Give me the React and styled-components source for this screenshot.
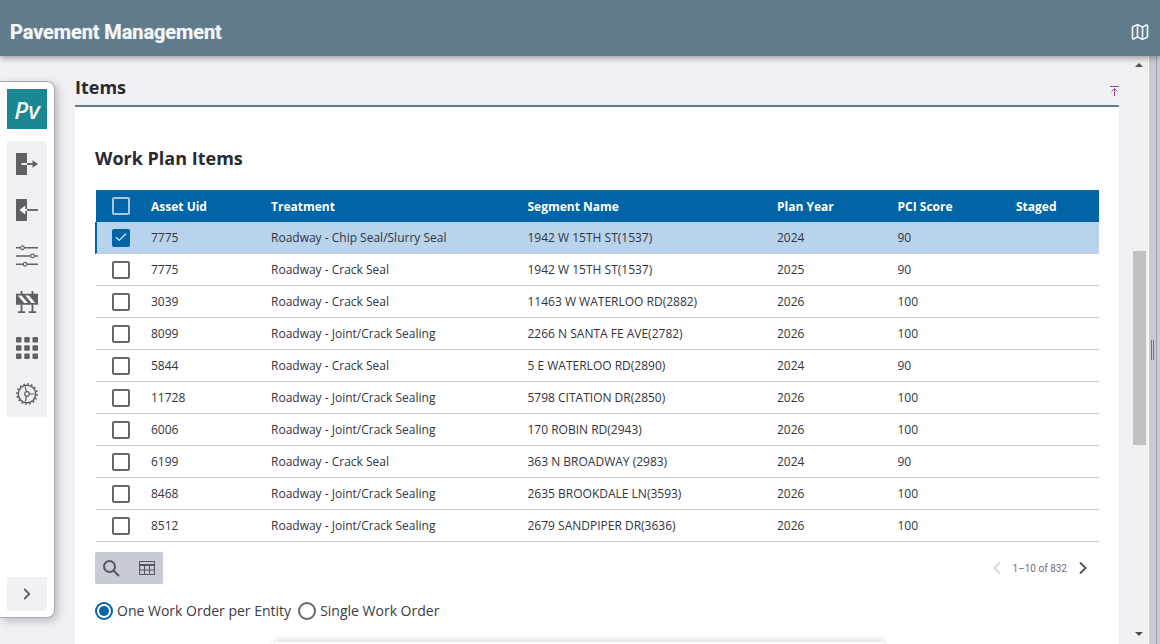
import React from 'react';
import styled, { createGlobalStyle } from 'styled-components';
import { Map, Check, ChevronRight, ChevronLeft } from 'lucide-react';

const GlobalStyle = createGlobalStyle`
  html, body {
    margin: 0;
    height: 100%;
    overflow: hidden;
    background: #f0f0f5;
    font-family: "Open Sans", "Liberation Sans", sans-serif;
  }
`;

const Page = styled.div`
  width: 1160px;
  height: 644px;
  display: flex;
  flex-direction: column;
  overflow: hidden;
  background: #f0f0f5;
`;

const Header = styled.header`
  height: 56px;
  flex: none;
  box-sizing: border-box;
  display: flex;
  align-items: center;
  justify-content: space-between;
  padding: 8px 10px 0 10px;
  background: #607b8a;
  box-shadow: 0 2px 6px rgba(40, 40, 50, 0.45);
  position: relative;
  z-index: 3;
`;

const AppTitle = styled.h1`
  margin: 0;
  font-family: Roboto, sans-serif;
  font-size: 20px;
  font-weight: 700;
  letter-spacing: -0.1px;
  color: #f4f6f8;
  text-shadow: 0 0 1px rgba(255, 255, 255, 0.6);
`;

const Body = styled.div`
  flex: 1;
  min-height: 0;
  display: flex;
`;

const SideColumn = styled.div`
  width: 75px;
  flex: none;
  padding-top: 25px;
`;

const SideNav = styled.nav`
  width: 55px;
  height: 537px;
  box-sizing: border-box;
  padding: 7px 7px 6px 7px;
  display: flex;
  flex-direction: column;
  background: #fff;
  border: 1px solid #a9a9b4;
  border-left: none;
  border-radius: 0 8px 8px 0;
  box-shadow: 3px 3px 8px rgba(60, 60, 80, 0.3);
`;

const Logo = styled.div`
  width: 40px;
  height: 40px;
  display: flex;
  align-items: center;
  justify-content: center;
  background: #1a8793;
  color: #fff;
  font-family: "Noto Sans", sans-serif;
  font-style: italic;
  font-size: 24px;
  font-weight: 500;
`;

const NavGroup = styled.div`
  margin-top: 12px;
  width: 40px;
  height: 276px;
  display: flex;
  flex-direction: column;
  align-items: center;
  background: #f0f0f5;
`;

const NavItem = styled.div`
  height: 46px;
  width: 40px;
  display: flex;
  align-items: center;
  justify-content: center;
  color: #5f5f66;
`;

const ExpandBtn = styled.div`
  margin-top: auto;
  width: 40px;
  height: 34px;
  display: flex;
  align-items: center;
  justify-content: center;
  background: #f0f0f5;
  color: #5f5f66;
`;

const Main = styled.main`
  width: 1044px;
  flex: none;
  display: flex;
  flex-direction: column;
`;

const SectionHead = styled.div`
  height: 51px;
  flex: none;
  box-sizing: border-box;
  display: flex;
  align-items: flex-start;
  justify-content: space-between;
  padding-top: 19px;
  border-bottom: 2px solid #607b8a;
`;

const SectionTitle = styled.h2`
  margin: 0;
  font-size: 18px;
  line-height: 24px;
  font-weight: 700;
  color: #2a2a30;
`;

const PinIcon = styled.svg`
  margin-top: 11px;
`;

const Card = styled.section`
  flex: 1;
  background: #fff;
  padding: 0 20px;
  position: relative;
`;

const CardTitle = styled.h3`
  margin: 0;
  padding-top: 38px;
  font-size: 18px;
  line-height: 26px;
  font-weight: 700;
  color: #2a2a30;
`;

const Grid = styled.div`
  margin: 19px 0 0 1px;
  width: 1003px;
`;

const Row = styled.div`
  display: grid;
  grid-template-columns: 55px 120px 256.5px 249.5px 120.5px 118.5px 1fr;
  align-items: center;
  height: 32px;
  box-sizing: border-box;
  background: ${p => (p.$head ? '#0064a6' : p.$selected ? '#b7d4ec' : '#fff')};
  border-bottom: ${p => (p.$head ? 'none' : '1px solid #c8c8d0')};
  box-shadow: ${p => (p.$selected ? '-1px 0 0 #0064a6, inset 1px 0 0 #0064a6' : 'none')};
  color: ${p => (p.$head ? '#fff' : '#33333d')};
  font-size: 12px;
  font-weight: ${p => (p.$head ? 700 : 400)};
`;

const Cell = styled.div`
  white-space: nowrap;
`;

const CheckCell = styled.div`
  display: flex;
  padding-left: 16px;
`;

const Box = styled.span`
  width: 18px;
  height: 18px;
  box-sizing: border-box;
  border-radius: 2px;
  display: flex;
  align-items: center;
  justify-content: center;
  border: 2px solid ${p => (p.$head ? '#a9c7e0' : p.$checked ? '#0064a6' : '#66666e')};
  background: ${p => (p.$checked ? '#0064a6' : 'transparent')};
  color: #dcebf7;
`;

const GridFooter = styled.div`
  margin-top: 10px;
  display: flex;
  align-items: center;
  justify-content: space-between;
`;

const ToolBox = styled.div`
  width: 68px;
  height: 32px;
  display: flex;
  align-items: center;
  gap: 18px;
  padding-left: 7px;
  box-sizing: border-box;
  background: #c8cad4;
  border-radius: 2px;
  color: #55555f;
`;

const Pager = styled.div`
  display: flex;
  align-items: center;
  gap: 6px;
  padding-right: 6px;
  font-family: Roboto, sans-serif;
  font-size: 10px;
  color: #6f6f78;
`;

const RadioRow = styled.div`
  margin-top: 17px;
  display: flex;
  align-items: center;
  font-size: 14px;
  color: #3a3a44;
`;

const Radio = styled.span`
  width: 18px;
  height: 18px;
  box-sizing: border-box;
  border-radius: 50%;
  border: 2px solid ${p => (p.$on ? '#0064a6' : '#66666e')};
  display: inline-flex;
  align-items: center;
  justify-content: center;
  margin-right: 4px;
  &::after {
    content: "";
    width: 10px;
    height: 10px;
    border-radius: 50%;
    background: ${p => (p.$on ? '#0064a6' : 'transparent')};
  }
`;

const RadioLabel = styled.span`
  margin-right: 7px;
`;

const FadeBar = styled.div`
  position: absolute;
  left: 200px;
  right: 235px;
  bottom: -8px;
  height: 10px;
  background: #fff;
  box-shadow: 0 -2px 6px rgba(60, 60, 80, 0.2);
`;

const Gutter = styled.div`
  width: 13px;
  flex: none;
  background: #f0f0f5;
`;

const ScrollTrack = styled.div`
  width: 16px;
  flex: none;
  position: relative;
  background: #f0f0f0;
`;

const ScrollThumb = styled.div`
  position: absolute;
  top: 195px;
  left: 1px;
  width: 13px;
  height: 194px;
  background: #c1c1c1;
`;

const Arrow = styled.div`
  position: absolute;
  left: 3px;
  width: 0;
  height: 0;
  border-left: 4px solid transparent;
  border-right: 4px solid transparent;
  ${p => (p.$up
    ? 'top: 7px; border-bottom: 4px solid #505050;'
    : 'bottom: 8px; border-top: 4px solid #505050;')}
`;

const Splitter = styled.div`
  width: 7px;
  flex: none;
  display: flex;
  align-items: center;
  justify-content: center;
  background: #c8cad4;
  border-left: 1px solid #fff;
`;

const SplitterEdge = styled.div`
  flex: 1;
  background: #c8cad4;
  border-left: 1px solid #a09fae;
`;

const Grip = styled.div`
  width: 1px;
  height: 20px;
  border-left: 1px solid #6a7080;
  border-right: 1px solid #6a7080;
`;

const rows = [
  ['7775', 'Roadway - Chip Seal/Slurry Seal', '1942 W 15TH ST(1537)', '2024', '90', true],
  ['7775', 'Roadway - Crack Seal', '1942 W 15TH ST(1537)', '2025', '90'],
  ['3039', 'Roadway - Crack Seal', '11463 W WATERLOO RD(2882)', '2026', '100'],
  ['8099', 'Roadway - Joint/Crack Sealing', '2266 N SANTA FE AVE(2782)', '2026', '100'],
  ['5844', 'Roadway - Crack Seal', '5 E WATERLOO RD(2890)', '2024', '90'],
  ['11728', 'Roadway - Joint/Crack Sealing', '5798 CITATION DR(2850)', '2026', '100'],
  ['6006', 'Roadway - Joint/Crack Sealing', '170 ROBIN RD(2943)', '2026', '100'],
  ['6199', 'Roadway - Crack Seal', '363 N BROADWAY (2983)', '2024', '90'],
  ['8468', 'Roadway - Joint/Crack Sealing', '2635 BROOKDALE LN(3593)', '2026', '100'],
  ['8512', 'Roadway - Joint/Crack Sealing', '2679 SANDPIPER DR(3636)', '2026', '100'],
];

const ExitIcon = () => (
  <svg width="22" height="22" viewBox="0 0 24 24">
    <rect x="0" y="0" width="12" height="24" fill="currentColor" />
    <path d="M6 12h14" stroke="#fff" strokeWidth="2" />
    <path d="M12 12h8" stroke="currentColor" strokeWidth="2" />
    <path d="M18 8l6 4-6 4z" fill="currentColor" />
  </svg>
);

const EnterIcon = () => (
  <svg width="22" height="22" viewBox="0 0 24 24">
    <rect x="0" y="0" width="12" height="24" fill="currentColor" />
    <path d="M12 12h12" stroke="currentColor" strokeWidth="2" />
    <path d="M5 12h7" stroke="#fff" strokeWidth="2" />
    <path d="M10 7l-6 5 6 5z" fill="#fff" />
  </svg>
);

const SlidersIcon = () => (
  <svg width="22" height="22" viewBox="0 0 24 24" fill="none" stroke="currentColor" strokeWidth="1.8">
    <path d="M0 3h24M0 12h24M0 21h24" />
    <circle cx="7" cy="3" r="2" fill="#f0f0f5" strokeWidth="1.2" />
    <circle cx="18" cy="12" r="2" fill="#f0f0f5" strokeWidth="1.2" />
    <circle cx="10" cy="21" r="2" fill="#f0f0f5" strokeWidth="1.2" />
  </svg>
);

const BarrierIcon = () => (
  <svg width="22" height="22" viewBox="0 0 24 24">
    <rect x="0" y="3" width="24" height="12" fill="currentColor" />
    <path d="M2 5h4l7 8H9zM10 5h4l7 8h-4z" fill="#fff" />
    <path d="M6 0v4M18 0v4M6 15v8M18 15v8M2 23h8M14 23h8" stroke="currentColor" strokeWidth="2" />
  </svg>
);

const AppsIcon = () => (
  <svg width="22" height="22" viewBox="0 0 24 24" fill="currentColor">
    {[0, 9, 18].map(y => [0, 9, 18].map(x => (
      <rect key={`${x}-${y}`} x={x} y={y} width="6" height="6" rx="1" />
    )))}
  </svg>
);

const GearPlayIcon = () => (
  <svg width="22" height="22" viewBox="0 0 24 24" fill="none" stroke="currentColor">
    <circle cx="12" cy="12" r="9.5" strokeWidth="1.6" />
    <circle cx="12" cy="12" r="11" strokeWidth="1.6" strokeDasharray="2 2.3" />
    <circle cx="12" cy="12" r="2.5" strokeWidth="1.3" />
    <path d="M10 4l1.5 5.7M10 20l1.5-5.7M20 12h-5.5" strokeWidth="1.3" />
  </svg>
);

const SearchIcon = () => (
  <svg width="18" height="18" viewBox="0 0 18 18" fill="none" stroke="currentColor">
    <circle cx="7.5" cy="7.5" r="5.5" strokeWidth="2" />
    <path d="M11.5 11.5L17 17" strokeWidth="2" />
  </svg>
);

const GridIcon = () => (
  <svg width="18" height="16" viewBox="0 0 18 16" fill="none" stroke="currentColor">
    <rect x="1.5" y="1.5" width="15" height="13" />
    <path d="M1.5 5h15" strokeWidth="2" />
    <path d="M6.5 5v9.5M11.5 5v9.5M1.5 10h15" />
  </svg>
);

const App = () => (
  <Page>
    <GlobalStyle />
    <Header>
      <AppTitle>Pavement Management</AppTitle>
      <Map size={20} color="#f0f3f5" strokeWidth={2} />
    </Header>
    <Body>
      <SideColumn>
        <SideNav>
          <Logo>Pv</Logo>
          <NavGroup>
            <NavItem><ExitIcon /></NavItem>
            <NavItem><EnterIcon /></NavItem>
            <NavItem><SlidersIcon /></NavItem>
            <NavItem><BarrierIcon /></NavItem>
            <NavItem><AppsIcon /></NavItem>
            <NavItem><GearPlayIcon /></NavItem>
          </NavGroup>
          <ExpandBtn><ChevronRight size={18} strokeWidth={2.4} /></ExpandBtn>
        </SideNav>
      </SideColumn>
      <Main>
        <SectionHead>
          <SectionTitle>Items</SectionTitle>
          <PinIcon width="9" height="10" viewBox="0 0 9 10" fill="none">
            <path d="M0 .5h9" stroke="#6a5a8a" />
            <path d="M4.5 10V3" stroke="#b0409a" />
            <path d="M1.5 5.5L4.5 2.5l3 3" stroke="#777" />
          </PinIcon>
        </SectionHead>
        <Card>
          <CardTitle>Work Plan Items</CardTitle>
          <Grid>
            <Row $head>
              <CheckCell><Box $head /></CheckCell>
              <Cell>Asset Uid</Cell>
              <Cell>Treatment</Cell>
              <Cell>Segment Name</Cell>
              <Cell>Plan Year</Cell>
              <Cell>PCI Score</Cell>
              <Cell>Staged</Cell>
            </Row>
            {rows.map(([uid, treatment, segment, year, pci, selected], i) => (
              <Row key={i} $selected={selected}>
                <CheckCell>
                  <Box $checked={selected}>
                    {selected && <Check size={15} strokeWidth={2} />}
                  </Box>
                </CheckCell>
                <Cell>{uid}</Cell>
                <Cell>{treatment}</Cell>
                <Cell>{segment}</Cell>
                <Cell>{year}</Cell>
                <Cell>{pci}</Cell>
                <Cell />
              </Row>
            ))}
          </Grid>
          <GridFooter>
            <ToolBox>
              <SearchIcon />
              <GridIcon />
            </ToolBox>
            <Pager>
              <ChevronLeft size={20} color="#d8d8dc" strokeWidth={2.2} />
              <span>1–10 of 832</span>
              <ChevronRight size={20} color="#55555f" strokeWidth={2.2} />
            </Pager>
          </GridFooter>
          <RadioRow>
            <Radio $on />
            <RadioLabel>One Work Order per Entity</RadioLabel>
            <Radio />
            <RadioLabel>Single Work Order</RadioLabel>
          </RadioRow>
          <FadeBar />
        </Card>
      </Main>
      <Gutter />
      <ScrollTrack>
        <Arrow $up />
        <ScrollThumb />
        <Arrow />
      </ScrollTrack>
      <Splitter><Grip /></Splitter>
      <SplitterEdge />
    </Body>
  </Page>
);

export default App;
